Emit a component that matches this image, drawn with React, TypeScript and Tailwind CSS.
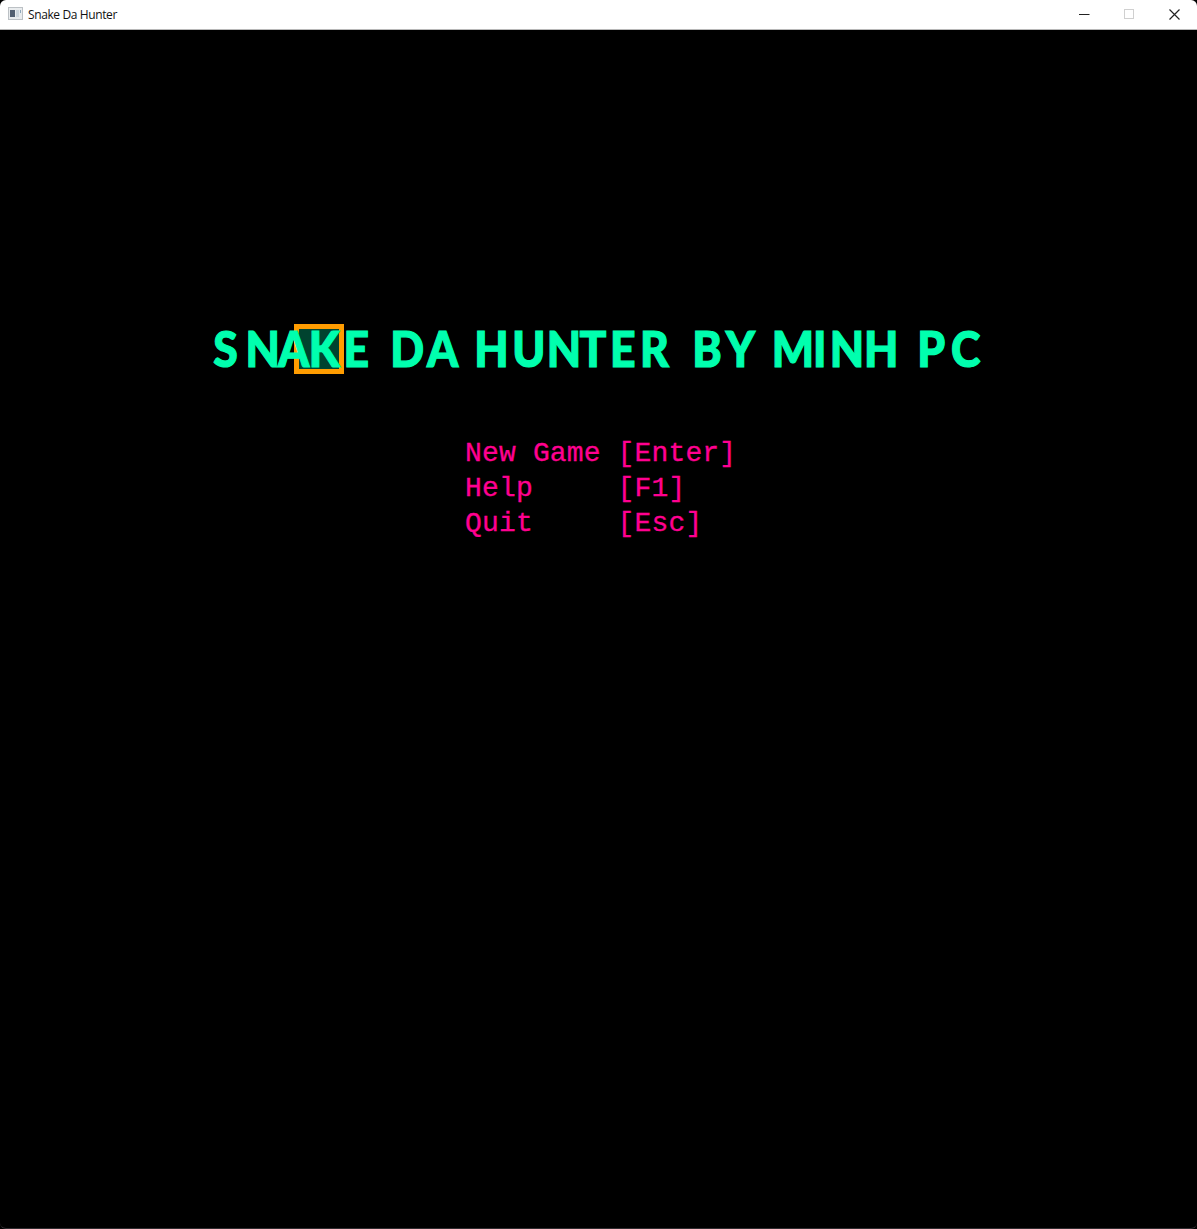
const words = [
  { text: 'SNAKE', x: '239.5 275.8 312.4 347 386' },
  { text: 'DA', x: '438.5 479.8' },
  { text: 'HUNTER', x: '533 575.5 614.2 651 685.5 719.2' },
  { text: 'BY', x: '777.8 815.4' },
  { text: 'MINH', x: '867.2 913.5 932.3 970.8' },
  { text: 'PC', x: '1030.5 1068.6' },
];

const menu = [
  { label: 'New Game', key: '[Enter]' },
  { label: 'Help', key: '[F1]' },
  { label: 'Quit', key: '[Esc]' },
];

function TitleBar() {
  return (
    <header className="flex h-[30px] items-center rounded-t-[6px] border-b border-[#b8b8b8] bg-white pl-2 text-[#111]">
      <svg width="15" height="13" viewBox="0 0 15 13" className="mb-0.5">
        <rect x="0.5" y="0.5" width="14" height="12" fill="#e9ecee" stroke="#bcc1c5" />
        <rect x="2" y="3" width="5" height="7" fill="#536071" />
        <rect x="8" y="3" width="3" height="7" fill="#cdd6dd" />
        <path d="M12.5 3V6" stroke="#8da7ba" />
      </svg>
      <h1 className="ml-[5px] w-[92px] whitespace-nowrap font-['Open_Sans',sans-serif] text-[12px] leading-4 tracking-[-0.39px]">
        Snake Da Hunter
      </h1>
      <div className="ml-auto flex h-full">
        <button aria-label="Minimize" className="flex w-[45px] items-center justify-center">
          <svg width="11" height="11"><path d="M0 5.5H10.5" stroke="#222" /></svg>
        </button>
        <button aria-label="Maximize" disabled className="flex w-[45px] items-center justify-center">
          <svg width="11" height="11"><rect x="0.5" y="0.5" width="9" height="9" fill="none" stroke="#d0d0d0" /></svg>
        </button>
        <button aria-label="Close" className="flex w-[45px] items-center justify-center">
          <svg width="11" height="11"><path d="M0.5 0.5L10.5 10.5M10.5 0.5L0.5 10.5" stroke="#222" strokeWidth="1.2" /></svg>
        </button>
      </div>
    </header>
  );
}

function Logo() {
  return (
    <svg width="789" height="60" viewBox="204 319 789 60" className="mx-auto block">
      <rect x="296.5" y="326.5" width="45" height="45" fill="#00432f" stroke="#ff9c00" strokeWidth="5" />
      <g
        transform="scale(0.89 1)"
        className="font-['Lato',sans-serif] text-[50px] font-black"
        fill="#00ffae"
        stroke="#00ffae"
        strokeWidth="1.2"
      >
        {words.map((w) => (
          <text key={w.text} x={w.x} y="367.2">{w.text}</text>
        ))}
      </g>
    </svg>
  );
}

export default function App() {
  return (
    <div className="flex h-[1229px] w-[1197px] flex-col overflow-hidden bg-black">
      <TitleBar />
      <main className="flex-1 rounded-b-[6px] border-b border-[#302c30] bg-black pt-[289px]">
        <Logo />
        <div className="ml-[465px] mt-[57px] w-[280px] font-['Liberation_Mono',monospace] text-[28px] leading-[35px] tracking-[0.17px] text-[#ff0090] [-webkit-text-stroke:0.3px_#ff0090]">
          {menu.map((m) => (
            <div key={m.label} className="flex whitespace-pre">
              <span className="w-[152.5px]">{m.label}</span>
              <span>{m.key}</span>
            </div>
          ))}
        </div>
      </main>
    </div>
  );
}
